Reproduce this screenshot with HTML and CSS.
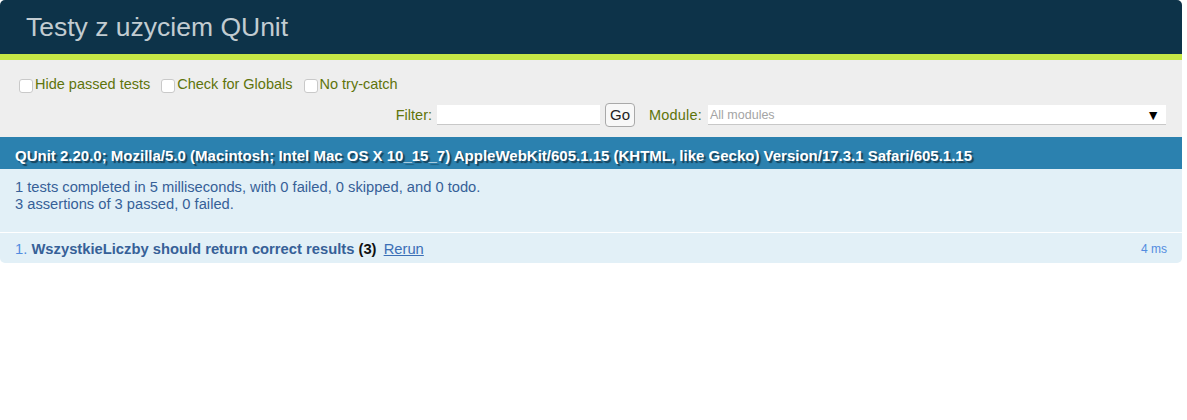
FILE: index.html
```html
<!DOCTYPE html>
<html lang="pl">
<head>
<meta charset="utf-8">
<title>Testy z użyciem QUnit</title>
<link rel="stylesheet" href="styles.css">
</head>
<body>
<div class="qunit">
  <h1 class="header">Testy z użyciem QUnit</h1>
  <div class="banner"></div>
  <div class="toolbar">
    <div class="checks">
      <label class="check"><span class="box"></span>Hide passed tests</label>
      <label class="check"><span class="box"></span>Check for Globals</label>
      <label class="check"><span class="box"></span>No try-catch</label>
    </div>
    <div class="filters">
      <span class="lbl">Filter:</span>
      <span class="input"></span>
      <span class="go">Go</span>
      <span class="lbl mod">Module:</span>
      <span class="select"><span class="ph">All modules</span><span class="tri">▼</span></span>
    </div>
  </div>
  <div class="ua">QUnit 2.20.0; Mozilla/5.0 (Macintosh; Intel Mac OS X 10_15_7) AppleWebKit/605.1.15 (KHTML, like Gecko) Version/17.3.1 Safari/605.1.15</div>
  <div class="result">
    <div>1 tests completed in 5 milliseconds, with 0 failed, 0 skipped, and 0 todo.</div>
    <div>3 assertions of 3 passed, 0 failed.</div>
  </div>
  <ol class="tests">
    <li class="test"><span class="name"><span class="num">1.</span> <strong>WszystkieLiczby should return correct results</strong> <b class="counts">(3)</b> <a class="rerun" href="#">Rerun</a></span><span class="runtime">4 ms</span></li>
  </ol>
</div>
</body>
</html>
```

FILE: styles.css
```css
html, body {
  margin: 0;
  padding: 0;
  background: #fff;
}
.qunit {
  width: 1182px;
  font-family: "Liberation Sans", Arial, Helvetica, sans-serif;
}
.header {
  margin: 0;
  height: 54px;
  line-height: 54px;
  padding-left: 26px;
  font-size: 26.5px;
  font-weight: 400;
  color: #C2CCD1;
  background: #0D3349;
  border-radius: 5px 5px 0 0;
}
.banner {
  height: 6px;
  background: #C6E746;
}
.toolbar {
  background: #EEEEEE;
  color: #5E740B;
  font-size: 14.5px;
  height: 77px;
  box-sizing: border-box;
  padding: 15px 16px 0 19px;
}
.checks {
  display: flex;
  height: 17px;
  align-items: center;
}
.check {
  display: flex;
  align-items: center;
  margin-right: 11px;
}
.box {
  width: 12px;
  height: 12px;
  margin-top: 4px;
  margin-right: 2px;
  border: 1px solid #c9c9c9;
  border-radius: 3px;
  background: #fff;
}
.filters {
  display: flex;
  align-items: center;
  justify-content: flex-end;
  margin-top: 11px;
  height: 24px;
}
.lbl {
  margin-right: 5px;
}
.input {
  width: 163px;
  height: 19px;
  background: #fff;
  border-bottom: 1px solid #c8c8c8;
}
.go {
  width: 28px;
  height: 22px;
  line-height: 22px;
  margin-left: 5px;
  text-align: center;
  color: #222;
  font-size: 15px;
  background: #f8f8f8;
  border: 1px solid #a9a9a9;
  border-radius: 4px;
}
.mod {
  margin-left: 14px;
  margin-right: 6px;
  letter-spacing: 0.2px;
}
.select {
  width: 458px;
  height: 20px;
  box-sizing: border-box;
  background: #fff;
  border-bottom: 1px solid #c8c8c8;
  display: flex;
  align-items: center;
  justify-content: space-between;
  padding: 0 6px 0 2px;
}
.ph {
  color: #a4a4a4;
  font-size: 12.5px;
}
.tri {
  color: #000;
  font-size: 14px;
}
.ua {
  height: 32px;
  box-sizing: border-box;
  padding: 6px 0 0 15px;
  line-height: 26px;
  background: #2B81AF;
  color: #fff;
  font-weight: 700;
  font-size: 15px;
  text-shadow: rgba(0, 0, 0, 0.5) 2px 2px 1px;
  white-space: nowrap;
  overflow: hidden;
}
.result {
  height: 64px;
  box-sizing: border-box;
  padding: 10px 15px 0 15px;
  background: #E2F0F7;
  color: #366097;
  font-size: 14.7px;
  line-height: 17px;
  border-bottom: 1px solid #fff;
}
.tests {
  list-style: none;
  margin: 0;
  padding: 0;
}
.test {
  display: flex;
  justify-content: space-between;
  align-items: center;
  height: 30px;
  padding: 1px 15px 0 15px;
  box-sizing: border-box;
  background: #E2F0F7;
  color: #528CE0;
  font-size: 14.75px;
  border-radius: 0 0 5px 5px;
}
.test strong {
  color: #366097;
}
.counts {
  color: #111;
}
.rerun {
  color: #3b6fb6;
  text-decoration: underline;
  margin-left: 3px;
}
.runtime {
  font-size: 12px;
  color: #528CE0;
}
```
